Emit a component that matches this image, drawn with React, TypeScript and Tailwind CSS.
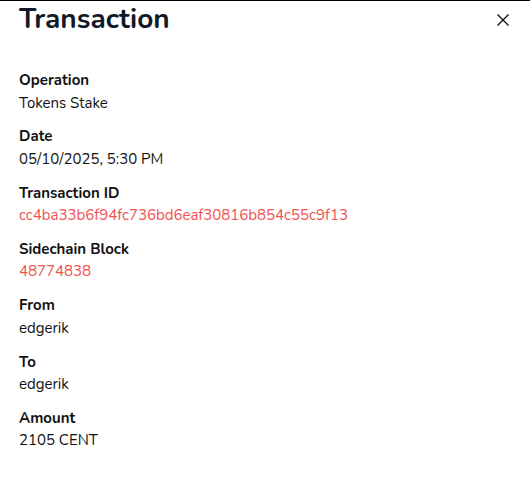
import React from "react";

const fields: { label: string; value: string; red?: boolean }[] = [
  { label: "Operation", value: "Tokens Stake" },
  { label: "Date", value: "05/10/2025, 5:30 PM" },
  { label: "Transaction ID", value: "cc4ba33b6f94fc736bd6eaf30816b854c55c9f13", red: true },
  { label: "Sidechain Block", value: "48774838", red: true },
  { label: "From", value: "edgerik" },
  { label: "To", value: "edgerik" },
  { label: "Amount", value: "2105 CENT" },
];

export default function App() {
  return (
    <div
      className="w-[530px] h-[478px] bg-white border-t border-black overflow-hidden"
      style={{ fontFamily: "Nunito, Lato, 'Noto Sans', sans-serif" }}
    >
      <div className="flex items-start justify-between pl-[19px] pr-[20px]">
        <h1 className="text-[28px] leading-[37px] font-bold text-[#111827]">Transaction</h1>
        <button className="mt-[12px] text-[#111] ">
          <svg width="14" height="14" viewBox="0 0 14 14" fill="none" stroke="currentColor" strokeWidth="1.4">
            <path d="M1.5 1.5L12.5 12.5M12.5 1.5L1.5 12.5" />
          </svg>
        </button>
      </div>
      <div className="flex flex-col gap-[11.33px] pl-[19px] mt-[31px]">
        {fields.map((f) => (
          <div key={f.label} className="flex flex-col">
            <div className="text-[15px] leading-[22.5px] font-bold text-[#111]">{f.label}</div>
            <div className={`text-[15px] leading-[22.5px] ${f.red ? "text-[#f05252]" : "text-[#111]"}`}>{f.value}</div>
          </div>
        ))}
      </div>
    </div>
  );
}
